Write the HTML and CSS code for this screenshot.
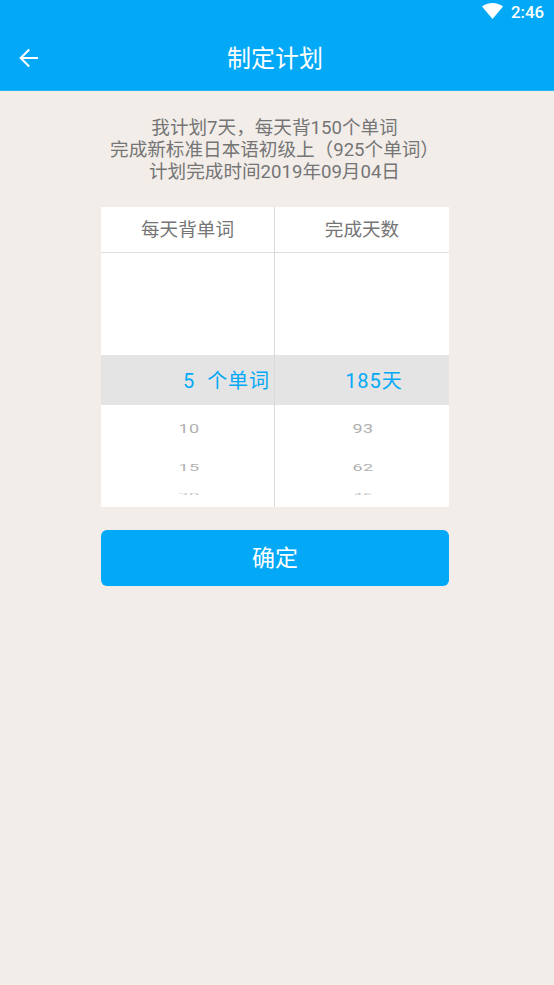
FILE: index.html
```html
<!DOCTYPE html>
<html lang="zh-CN">
<head>
<meta charset="utf-8">
<title>制定计划</title>
<link rel="stylesheet" href="styles.css">
</head>
<body>
<header class="top">
  <div class="status">
    <svg class="wifi" viewBox="0 0 21 16" width="21" height="16"><path d="M0 3.6C2.9 1.2 6.5 0 10.5 0S18.100 1.200 21 3.600L10.500 16Z" fill="#fff"/></svg>
    <span class="clock">2:46</span>
  </div>
  <div class="bar">
    <svg class="back" viewBox="0 0 20 20" width="20" height="20"><path d="M19 10H2M10.200 1.500L1.700 10L10.200 18.500" fill="none" stroke="#fff" stroke-width="2"/></svg>
    <h1 class="title">制定计划</h1>
  </div>
</header>
<main class="content">
  <div class="summary">
    <p>我计划7天，每天背150个单词</p>
    <p class="book">完成新标准日本语初级上（925个单词）</p>
    <p>计划完成时间2019年09月04日</p>
  </div>
  <section class="picker">
    <div class="column">
      <div class="head">每天背单词</div>
      <div class="wheel">
        <div class="row selected"><span class="value">5</span><span class="unit words">个单词</span></div>
        <div class="row near"><span>10</span></div>
        <div class="row far"><span>15</span></div>
        <div class="row edge"><span>20</span></div>
      </div>
    </div>
    <div class="column">
      <div class="head">完成天数</div>
      <div class="wheel">
        <div class="row selected"><span class="value">185</span><span class="unit">天</span></div>
        <div class="row near"><span>93</span></div>
        <div class="row far"><span>62</span></div>
        <div class="row edge"><span>46</span></div>
      </div>
    </div>
  </section>
  <button class="confirm">确定</button>
</main>
</body>
</html>
```
FILE: styles.css
```css
* { box-sizing: border-box; }
body {
  margin: 0;
  min-height: 985px;
  background: #f2ede9;
  color: #757575;
  font-family: Roboto, "Noto Sans CJK SC", sans-serif;
}
.top {
  height: 91px;
  background: #03a9f6;
  color: #fff;
  border-bottom: 1px solid #2bb3f3;
}
.status {
  height: 25px;
  display: flex;
  justify-content: flex-end;
  align-items: flex-start;
  padding: 3px 10px 0 0;
}
.wifi { margin-right: 8px; }
.clock {
  width: 33px;
  font-size: 16.8px;
  font-weight: 500;
  line-height: 19px;
}
.bar {
  height: 65px;
  display: grid;
  grid-template-columns: 1fr auto 1fr;
  align-items: center;
  padding: 0 23px 0 19px;
}
.title {
  grid-column: 2;
  margin: 0;
  padding-top: 2px;
  font-size: 24px;
  font-weight: 400;
  line-height: 36px;
}
.content {
  width: 348px;
  margin: 0 0 0 101px;
  padding-top: 26px;
}
.summary {
  font-size: 18.6px;
  line-height: 22px;
  text-align: center;
  white-space: nowrap;
}
.summary p { margin: 0 1px 0 0; }
.picker {
  display: flex;
  height: 300px;
  margin-top: 24px;
  background: #fff;
}
.column { width: 174px; }
.column:first-child { border-right: 1px solid #d9d9d9; }
.head {
  height: 46px;
  border-bottom: 1px solid #dedede;
  font-size: 18.600px;
  line-height: 47px;
  text-align: center;
}
.wheel { padding-top: 102px; }
.row {
  display: flex;
  justify-content: center;
  align-items: center;
  padding-left: 2px;
  color: #b0b0b0;
  font-size: 18px;
  letter-spacing: .5px;
  line-height: 20px;
}
.column:first-child .row { padding-left: 3px; }
.column .row.selected {
  display: grid;
  grid-template-columns: 1fr auto 1fr;
  height: 50px;
  padding: 2px 0 0 1px;
  background: #e4e4e4;
  color: #03a9f6;
  font-size: 20px;
  letter-spacing: 1px;
}
.value { grid-column: 2; padding-left: 2px; }
.words { padding-left: 12px; white-space: nowrap; }
.near { height: 47px; }
.near span { transform: scaleY(.72); }
.far { height: 31px; }
.far span { transform: scaleY(.46); }
.edge { height: 22px; }
.edge span {
  clip-path: inset(0 0 52% 0);
  opacity: .8;
  transform: translateY(1px) scaleY(.2);
}
.confirm {
  display: block;
  width: 100%;
  height: 56px;
  margin-top: 23px;
  padding: 1px 0 0;
  border: 0;
  border-radius: 6px;
  background: #03a9f6;
  color: #fff;
  font: 400 23px/56px Roboto, "Noto Sans CJK SC", sans-serif;
}
```
